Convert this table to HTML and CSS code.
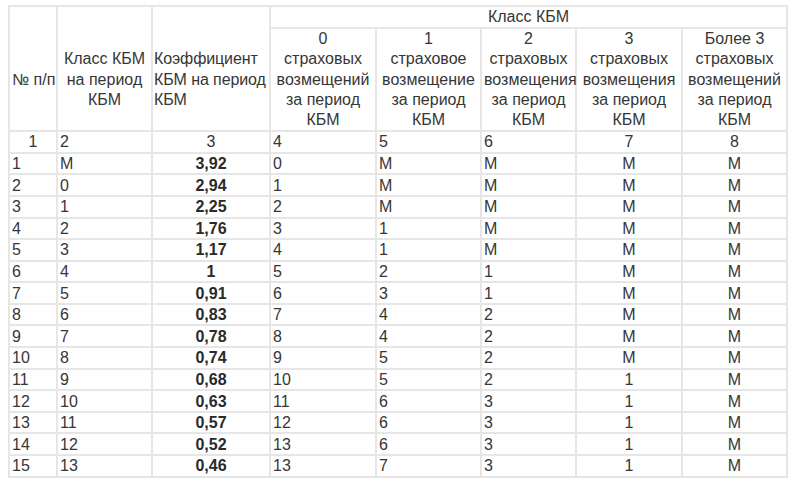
FILE: index.html
```html
<!DOCTYPE html>
<html lang="ru">
<head>
<meta charset="utf-8">
<link rel="stylesheet" href="styles.css">
</head>
<body>
<table class="kbm">
  <colgroup>
    <col class="c1"><col class="c2"><col class="c3"><col class="c4"><col class="c5"><col class="c6"><col class="c7"><col class="c8">
  </colgroup>
  <thead>
    <tr class="r-top">
      <th rowspan="2" class="left lift nowrap">№ п/п</th>
      <th rowspan="2" class="center lift">Класс КБМ на период КБМ</th>
      <th rowspan="2" class="left lift tight">Коэффициент КБМ на период КБМ</th>
      <th colspan="5" class="center">Класс КБМ</th>
    </tr>
    <tr class="r-sub">
      <th class="center">0<br>страховых возмещений за период КБМ</th>
      <th class="center">1<br>страховое возмещение за период КБМ</th>
      <th class="center">2<br>страховых возмещения за период КБМ</th>
      <th class="center">3<br>страховых возмещения за период КБМ</th>
      <th class="center">Более 3 страховых возмещений за период КБМ</th>
    </tr>
    <tr class="r-num">
      <td class="center">1</td><td>2</td><td class="center">3</td><td>4</td><td>5</td><td>6</td><td class="center">7</td><td class="center">8</td>
    </tr>
  </thead>
  <tbody>
    <tr><td>1</td><td>М</td><td class="coef">3,92</td><td>0</td><td>М</td><td>М</td><td class="center">М</td><td class="center">М</td></tr>
    <tr><td>2</td><td>0</td><td class="coef">2,94</td><td>1</td><td>М</td><td>М</td><td class="center">М</td><td class="center">М</td></tr>
    <tr><td>3</td><td>1</td><td class="coef">2,25</td><td>2</td><td>М</td><td>М</td><td class="center">М</td><td class="center">М</td></tr>
    <tr><td>4</td><td>2</td><td class="coef">1,76</td><td>3</td><td>1</td><td>М</td><td class="center">М</td><td class="center">М</td></tr>
    <tr><td>5</td><td>3</td><td class="coef">1,17</td><td>4</td><td>1</td><td>М</td><td class="center">М</td><td class="center">М</td></tr>
    <tr><td>6</td><td>4</td><td class="coef">1</td><td>5</td><td>2</td><td>1</td><td class="center">М</td><td class="center">М</td></tr>
    <tr><td>7</td><td>5</td><td class="coef">0,91</td><td>6</td><td>3</td><td>1</td><td class="center">М</td><td class="center">М</td></tr>
    <tr><td>8</td><td>6</td><td class="coef">0,83</td><td>7</td><td>4</td><td>2</td><td class="center">М</td><td class="center">М</td></tr>
    <tr><td>9</td><td>7</td><td class="coef">0,78</td><td>8</td><td>4</td><td>2</td><td class="center">М</td><td class="center">М</td></tr>
    <tr><td>10</td><td>8</td><td class="coef">0,74</td><td>9</td><td>5</td><td>2</td><td class="center">М</td><td class="center">М</td></tr>
    <tr><td>11</td><td>9</td><td class="coef">0,68</td><td>10</td><td>5</td><td>2</td><td class="center">1</td><td class="center">М</td></tr>
    <tr><td>12</td><td>10</td><td class="coef">0,63</td><td>11</td><td>6</td><td>3</td><td class="center">1</td><td class="center">М</td></tr>
    <tr><td>13</td><td>11</td><td class="coef">0,57</td><td>12</td><td>6</td><td>3</td><td class="center">1</td><td class="center">М</td></tr>
    <tr><td>14</td><td>12</td><td class="coef">0,52</td><td>13</td><td>6</td><td>3</td><td class="center">1</td><td class="center">М</td></tr>
    <tr><td>15</td><td>13</td><td class="coef">0,46</td><td>13</td><td>7</td><td>3</td><td class="center">1</td><td class="center">М</td></tr>
  </tbody>
</table>
</body>
</html>
```

FILE: styles.css
```css
html, body {
  margin: 0;
  padding: 0;
  background: #ffffff;
}

body {
  padding: 5px 0 0 8px;
  font-family: "Liberation Sans", Arial, sans-serif;
  font-size: 16px;
  color: #363636;
}

.kbm {
  border-collapse: collapse;
  table-layout: fixed;
  width: 780px;
}

.c1 { width: 48px; }
.c2 { width: 95px; }
.c3 { width: 118px; }
.c4 { width: 106px; }
.c5 { width: 105px; }
.c6 { width: 95px; }
.c7 { width: 106px; }
.c8 { width: 105px; }

.kbm th,
.kbm td {
  border: 2px solid #e6e6e6;
  padding: 0 2px;
  line-height: 19px;
  font-weight: normal;
  text-align: left;
  vertical-align: middle;
  white-space: normal;
}

.kbm th {
  line-height: 20.2px;
}

.kbm .center { text-align: center; }
.kbm .left { text-align: left; }
.kbm .nowrap { white-space: nowrap; }

.kbm .lift {
  padding-top: 22px;
}

.kbm .tight {
  padding-left: 1px;
  padding-right: 0;
  letter-spacing: -0.1px;
}

.r-top { height: 22px; }
.r-sub { height: 103px; }
.r-num { height: 21.5px; }
.kbm tbody tr { height: 21.6px; }

.kbm td.coef {
  text-align: center;
  font-weight: bold;
  color: #2a2a2a;
}
```
